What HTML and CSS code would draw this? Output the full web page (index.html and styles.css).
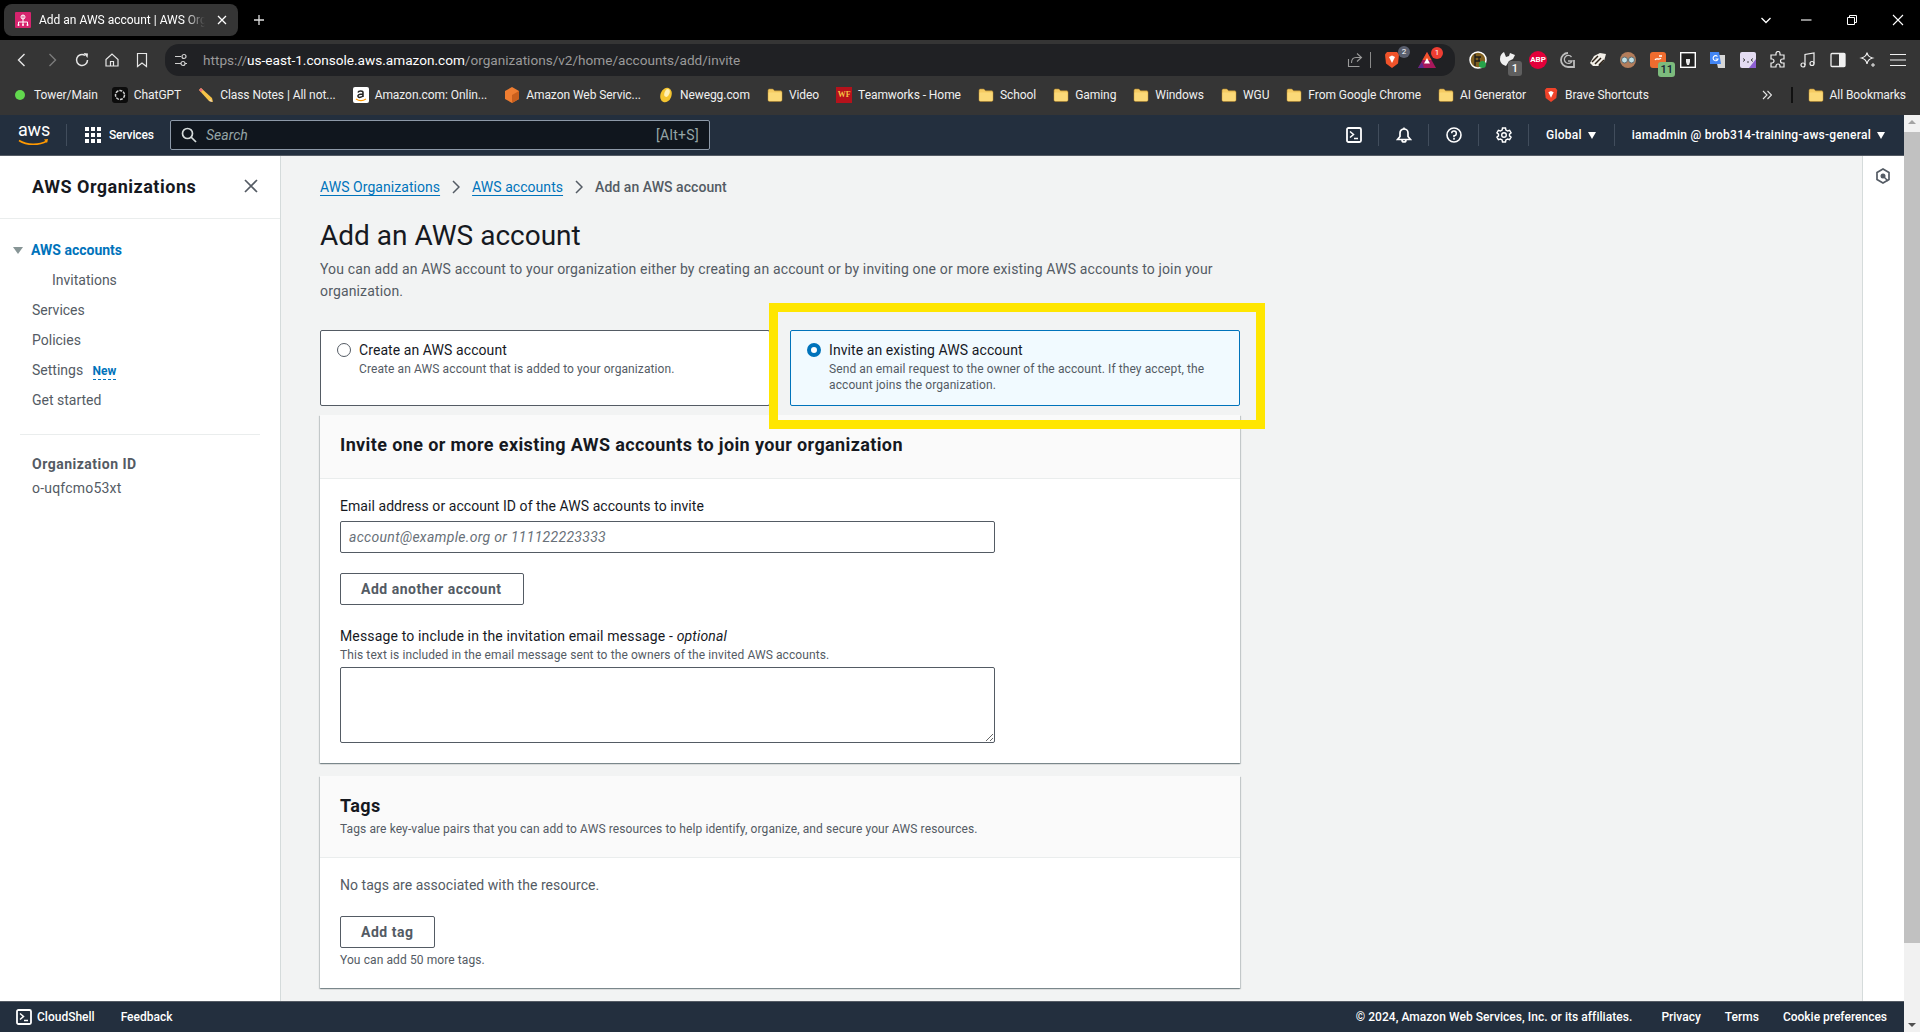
FILE: index.html
```html
<!DOCTYPE html>
<html lang="en">
<head>
  <meta charset="UTF-8" />
  <title>Add an AWS account | AWS Organizations</title>
  <link rel="stylesheet" href="styles.css">
</head>
<body>
  <svg class="defs" width="0" height="0">
    <symbol id="folder" viewBox="0 0 16 16">
      <path d="M1 3.5C1 2.7 1.6 2 2.4 2h3.4l1.8 1.8h6C14.4 3.8 15 4.4 15 5.200V13c0 .8-.6 1.400-1.400 1.400H2.400C1.600 14.400 1 13.800 1 13z" fill="#f5cb62" stroke="#a9812f" stroke-width=".6"/>
      <path d="M1.400 5.600h13.200V13c0 .6-.4 1-1 1H2.400c-.6 0-1-.4-1-1z" fill="#fbd978"/>
    </symbol>
    <symbol id="terminal" viewBox="0 0 16 16">
      <rect x="1" y="1" width="14" height="14" rx="1.500" fill="none" stroke="currentColor" stroke-width="1.800"/>
      <path d="M4 4.500 7.500 7.500 4 10.500M8 11.500h4" fill="none" stroke="currentColor" stroke-width="1.500"/>
    </symbol>
  </svg>

  <!-- Browser chrome -->
  <div class="tabstrip">
    <div class="tab">
      <svg class="favicon" width="16" height="16" viewBox="0 0 16 16">
        <rect width="16" height="16" rx="1" fill="#d6246e"/>
        <path d="M8 3v6M3.500 13v-3h9v3M8 9v4" fill="none" stroke="#fff" stroke-width="1"/>
        <circle cx="8" cy="5" r="2" fill="none" stroke="#fff"/>
        <circle cx="3.500" cy="13" r="1" fill="#fff"/><circle cx="8" cy="13" r="1" fill="#fff"/><circle cx="12.500" cy="13" r="1" fill="#fff"/>
      </svg>
      <span class="tab-title">Add an AWS account | AWS Organizations</span>
      <svg class="tab-close" width="10" height="10" viewBox="0 0 10 10"><path d="M1 1l8 8M9 1 1 9" stroke="#fff" stroke-width="1.300"/></svg>
    </div>
    <svg class="tab-new" width="12" height="12" viewBox="0 0 12 12"><path d="M6 1v10M1 6h10" stroke="#e0e0e0" stroke-width="1.300"/></svg>
    <div class="win-buttons">
      <svg width="14" height="14" viewBox="0 0 14 14"><path d="M2.500 5 7 9.500 11.500 5" fill="none" stroke="#fff" stroke-width="1.300"/></svg>
      <svg width="14" height="14" viewBox="0 0 14 14"><path d="M2 7h10.500" stroke="#fff" stroke-width="1.100"/></svg>
      <svg width="14" height="14" viewBox="0 0 14 14"><path d="M2.500 4.500h7v7h-7zM4.500 4.500V2.500h7v7h-2" fill="none" stroke="#fff"/></svg>
      <svg width="14" height="14" viewBox="0 0 14 14"><path d="M2 2l10 10M12 2 2 12" stroke="#fff" stroke-width="1.100"/></svg>
    </div>
  </div>

  <div class="toolbar">
    <div class="nav-buttons">
      <span class="slot"><svg width="16" height="16" viewBox="0 0 16 16"><path d="M10.500 2 4.500 8l6 6" fill="none" stroke="#e6e6e6" stroke-width="1.400"/></svg></span>
      <span class="slot"><svg width="16" height="16" viewBox="0 0 16 16"><path d="M5.500 2l6 6-6 6" fill="none" stroke="#7b7b7b" stroke-width="1.400"/></svg></span>
      <span class="slot"><svg width="16" height="16" viewBox="0 0 16 16"><path d="M13.500 8A5.500 5.500 0 1 1 11 3.400" fill="none" stroke="#e6e6e6" stroke-width="1.500"/><path d="M9.500 1l4.500.5-.5 4.500z" fill="#e6e6e6"/></svg></span>
      <span class="slot"><svg width="16" height="16" viewBox="0 0 16 16"><path d="M2 7.500 8 2l6 5.500V14H2zM6.500 14V9.500h3V14" fill="none" stroke="#e6e6e6" stroke-width="1.200"/></svg></span>
      <span class="slot"><svg width="16" height="16" viewBox="0 0 16 16"><path d="M3.500 1.500h9V14.500L8 11l-4.500 3.500z" fill="none" stroke="#e6e6e6" stroke-width="1.200"/></svg></span>
    </div>
    <div class="omnibox">
      <svg class="site-icon" width="16" height="16" viewBox="0 0 16 16"><path d="M2 4.500h6M12 11.500h2M2 11.500h6" stroke="#d0d0d0" stroke-width="1.200"/><circle cx="11" cy="4.500" r="2" fill="none" stroke="#d0d0d0" stroke-width="1.200"/><circle cx="10" cy="11.500" r="2" fill="none" stroke="#d0d0d0" stroke-width="1.200"/></svg>
      <span class="url"><span class="url-dim">https://</span><span class="url-host">us-east-1.console.aws.amazon.com</span><span class="url-dim">/organizations/v2/home/accounts/add/invite</span></span>
      <svg class="share-icon" width="16" height="16" viewBox="0 0 16 16"><path d="M10 1.500 14.500 5.500 10 9.500M14 5.500H9C6 5.500 4.500 7.500 4.500 11M1.500 7v7.500h11" fill="none" stroke="#9a9a9a" stroke-width="1.100"/></svg>
      <span class="omni-sep"></span>
      <span class="shield-wrap">
        <svg width="16" height="18" viewBox="0 0 16 18"><path d="M3 1h10l2 2.500-1 9L8 17l-6-4.500-1-9z" fill="#f0532a"/><path d="M5 6l3-1.500L11 6 8 12z" fill="#fff"/></svg>
        <span class="badge badge-grey">2</span>
      </span>
      <span class="bat-wrap">
        <svg width="18" height="16" viewBox="0 0 18 16"><path d="M9 0 18 16H0z" fill="#a8185c"/><path d="M9 0 13.500 8h-9z" fill="#f0532a"/><path d="M9 6l3 5.500H6z" fill="#fff"/><path d="M0 16l4-6 2 6z" fill="#5b2a8c"/></svg>
        <span class="badge badge-red">1</span>
      </span>
    </div>
    <div class="ext-row">
      <span class="slot"><svg width="18" height="18" viewBox="0 0 18 18"><circle cx="9" cy="9" r="8" fill="#806020" stroke="#fff" stroke-width="1.500"/><path d="M6 3v12M6 6h6M6 10h5M10 6v4" stroke="#1c1c1c" stroke-width="1.300" fill="none"/><circle cx="13.500" cy="13.500" r="3.500" fill="#27a34a"/></svg></span>
      <span class="slot ext-rel">
        <svg width="18" height="18" viewBox="0 0 18 18"><path d="M1 8c0-4 2-6 4-7l2 5 3-1 1-3 5 2-2 4-4 2-3 5C4 14 1 12 1 8z" fill="#f0f0f0"/></svg>
        <span class="ext-count ext-count-grey">1</span>
      </span>
      <span class="slot"><span class="abp">ABP</span></span>
      <span class="slot"><svg width="16" height="16" viewBox="0 0 16 16"><path d="M8 1a7 7 0 1 0 0 14h6V8" fill="none" stroke="#bdbdbd" stroke-width="1.800"/><path d="M11.500 5A4 4 0 1 0 12 9H8" fill="none" stroke="#bdbdbd" stroke-width="1.300"/></svg></span>
      <span class="slot"><svg width="18" height="16" viewBox="0 0 18 16"><path d="M1 11 5 4l6-3 6 1-2 7-6 5H4z" fill="#f2efe8"/><path d="M3 10l6-6M6 12l6-6M10 13l5-5" stroke="#2b2118" stroke-width="1.500"/></svg></span>
      <span class="slot"><svg width="18" height="18" viewBox="0 0 18 18"><circle cx="9" cy="9" r="8" fill="#b37d5b"/><circle cx="5.500" cy="9" r="3" fill="#bfe0e6" stroke="#5c6a70"/><circle cx="12.500" cy="9" r="3" fill="#bfe0e6" stroke="#5c6a70"/></svg></span>
      <span class="slot ext-rel">
        <svg width="16" height="16" viewBox="0 0 16 16"><rect width="16" height="16" rx="3" fill="#ef6c2f"/><path d="M5 8c2-3 4 1 6-2M9 4h3" stroke="#fff" stroke-width="1.300" fill="none"/></svg>
        <span class="ext-count ext-count-green">11</span>
      </span>
      <span class="slot"><svg width="16" height="16" viewBox="0 0 16 16"><rect x=".7" y=".7" width="14.600" height="14.600" fill="#222" stroke="#fff" stroke-width="1.400"/><path d="M8 3v3M6 7h4v3L9 13H7L6 10z" fill="#e8e8e8"/></svg></span>
      <span class="slot"><svg width="18" height="18" viewBox="0 0 18 18"><path d="M6 4h10v13H9z" fill="#d7d7d7"/><path d="M1 1h9l2 12H1z" fill="#4285f4"/><path d="M8.500 5.500a2.500 2.500 0 1 0 .5 2.500H6.500" fill="none" stroke="#fff" stroke-width="1.100"/></svg></span>
      <span class="slot"><svg width="16" height="16" viewBox="0 0 16 16"><rect width="16" height="16" rx="2" fill="#e4dcf2"/><path d="M9 16h7V7z" fill="#8d5fd3"/><path d="M3 6.500l2 1.500-2 1.500M13 6.500 11 8l2 1.500M7 10h2" stroke="#444" stroke-width="1" fill="none"/></svg></span>
      <span class="slot"><svg width="18" height="18" viewBox="0 0 18 18"><path d="M7 2.500a2 2 0 0 1 4 0V4h4v4h-1.500a2 2 0 0 0 0 4H15v4H11v-1a2 2 0 0 0-4 0v1H2v-4h1a2 2 0 0 0 0-4H2V4h5z" fill="none" stroke="#f0f0f0" stroke-width="1.200"/></svg></span>
      <span class="slot"><svg width="18" height="18" viewBox="0 0 18 18"><path d="M6 14V3.500L15 2v10.500" fill="none" stroke="#f0f0f0" stroke-width="1.200"/><circle cx="4" cy="14" r="2" fill="none" stroke="#f0f0f0" stroke-width="1.200"/><circle cx="13" cy="12.500" r="2" fill="none" stroke="#f0f0f0" stroke-width="1.200"/></svg></span>
      <span class="slot"><svg width="16" height="16" viewBox="0 0 16 16"><rect x="1" y="1.500" width="14" height="13" rx="1" fill="none" stroke="#f0f0f0" stroke-width="1.300"/><rect x="9" y="1.500" width="6" height="13" fill="#f0f0f0"/></svg></span>
      <span class="slot"><svg width="18" height="18" viewBox="0 0 18 18"><path d="M8 1.500c.5 3 2 4.500 5.500 5.500-3.500 1-5 2.500-5.500 6-.5-3.500-2-5-5.500-6C6 6 7.500 4.500 8 1.500z" fill="none" stroke="#f0f0f0" stroke-width="1.200"/><path d="M14 12v4M12 14h4" stroke="#f0f0f0"/></svg></span>
      <span class="slot"><svg width="16" height="14" viewBox="0 0 16 14"><path d="M0 1.500h16M0 7h16M0 12.500h16" stroke="#f0f0f0" stroke-width="1.200"/></svg></span>
    </div>
  </div>

  <div class="bookmarks">
    <a class="bm bm-tower"><span class="green-dot"></span>Tower/Main</a>
    <a class="bm"><svg width="16" height="16" viewBox="0 0 16 16"><rect width="16" height="16" rx="3" fill="#0c0c0c"/><circle cx="8" cy="8" r="4.500" fill="none" stroke="#d0d0d0" stroke-width="1.500" stroke-dasharray="3 1"/></svg>ChatGPT</a>
    <a class="bm"><svg width="16" height="16" viewBox="0 0 16 16"><path d="M1 3 3 1l11 10 1 4-4-1z" fill="#f6c348"/><path d="M1 3 3 1l2 2-2 2z" fill="#e9707a"/><path d="M14 15l-3-1 2-2z" fill="#f2d7b6"/></svg>Class Notes | All not...</a>
    <a class="bm"><svg width="16" height="16" viewBox="0 0 16 16"><rect width="16" height="16" rx="2" fill="#fff"/><path d="M5 5.500c.5-2 5-2 5 0V10M10 7C6 7 4.500 8 5 9.500S9 10.500 10 8.500" fill="none" stroke="#222" stroke-width="1.500"/><path d="M3 12c3 2 7 2 10 0" fill="none" stroke="#f90" stroke-width="1.200"/></svg>Amazon.com: Onlin...</a>
    <a class="bm"><svg width="16" height="16" viewBox="0 0 16 16"><path d="M8 0 15 4v8l-7 4-7-4V4z" fill="#ef7d31"/><path d="M8 8 15 4v8l-7 4z" fill="#c95f1d"/></svg>Amazon Web Servic...</a>
    <a class="bm"><svg width="16" height="16" viewBox="0 0 16 16"><ellipse cx="8" cy="8" rx="5.500" ry="7.500" transform="rotate(20 8 8)" fill="#f4c430"/><ellipse cx="9" cy="6" rx="2.500" ry="4" transform="rotate(20 9 6)" fill="#fff0b3"/></svg>Newegg.com</a>
    <a class="bm"><svg width="16" height="16"><use href="#folder"/></svg>Video</a>
    <a class="bm"><span class="wf-icon">WF</span>Teamworks - Home</a>
    <a class="bm"><svg width="16" height="16"><use href="#folder"/></svg>School</a>
    <a class="bm"><svg width="16" height="16"><use href="#folder"/></svg>Gaming</a>
    <a class="bm"><svg width="16" height="16"><use href="#folder"/></svg>Windows</a>
    <a class="bm"><svg width="16" height="16"><use href="#folder"/></svg>WGU</a>
    <a class="bm"><svg width="16" height="16"><use href="#folder"/></svg>From Google Chrome</a>
    <a class="bm"><svg width="16" height="16"><use href="#folder"/></svg>AI Generator</a>
    <a class="bm"><svg width="16" height="16" viewBox="0 0 16 18"><path d="M3 1h10l2 2.500-1 9L8 17l-6-4.500-1-9z" fill="#f0432a"/><path d="M5 6l3-1.500L11 6 8 12z" fill="#fff"/></svg>Brave Shortcuts</a>
    <span class="bm-more">
      <svg width="10" height="10" viewBox="0 0 10 10"><path d="M1 1l4 4-4 4M5.500 1l4 4-4 4" fill="none" stroke="#e6e6e6" stroke-width="1.100"/></svg>
      <span class="bm-sep"></span>
      <a class="bm"><svg width="16" height="16"><use href="#folder"/></svg>All Bookmarks</a>
    </span>
  </div>

  <!-- Page viewport -->
  <div class="viewport">
    <div class="app">
      <nav class="awsnav">
        <div class="aws-logo">
          <span class="aws-logo-text">aws</span>
          <svg width="32" height="9" viewBox="0 0 32 9">
            <path d="M1 1.500c8 5 20 5 28 .5" fill="none" stroke="#f90" stroke-width="1.600"/>
            <path d="M26 .5l4-.5-1 4z" fill="#f90"/>
          </svg>
        </div>
        <span class="nav-sep nav-sep-logo"></span>
        <svg class="grid-icon" width="16" height="16" viewBox="0 0 16 16" fill="#fff">
          <rect width="4" height="4"/><rect x="6" width="4" height="4"/><rect x="12" width="4" height="4"/>
          <rect y="6" width="4" height="4"/><rect x="6" y="6" width="4" height="4"/><rect x="12" y="6" width="4" height="4"/>
          <rect y="12" width="4" height="4"/><rect x="6" y="12" width="4" height="4"/><rect x="12" y="12" width="4" height="4"/>
        </svg>
        <span class="nav-services">Services</span>
        <div class="search">
          <svg width="16" height="16" viewBox="0 0 16 16"><circle cx="6.500" cy="6.500" r="5" fill="none" stroke="#d5dbdb" stroke-width="1.700"/><path d="M10 10l5 5" stroke="#d5dbdb" stroke-width="1.700"/></svg>
          <span class="search-text">Search</span>
          <span class="search-key">[Alt+S]</span>
        </div>
        <div class="nav-right">
          <span class="nav-icon"><svg width="16" height="16" color="#fff"><use href="#terminal"/></svg></span>
          <span class="nav-sep"></span>
          <span class="nav-icon"><svg width="16" height="16" viewBox="0 0 16 16"><path d="M1.500 12.500 4 9.500V6a4 4 0 0 1 8 0v3.500l2.500 3zM6 13a2 2 0 0 0 4 0" fill="none" stroke="#fff" stroke-width="1.700"/><path d="M8 .5v2" stroke="#fff" stroke-width="1.500"/></svg></span>
          <span class="nav-sep"></span>
          <span class="nav-icon"><svg width="16" height="16" viewBox="0 0 16 16"><circle cx="8" cy="8" r="7" fill="none" stroke="#fff" stroke-width="1.600"/><path d="M5.700 6.200A2.300 2.300 0 1 1 8 8.700v1.500" fill="none" stroke="#fff" stroke-width="1.500"/><rect x="7.200" y="11" width="1.600" height="1.700" fill="#fff"/></svg></span>
          <span class="nav-sep"></span>
          <span class="nav-icon"><svg width="16" height="16" viewBox="0 0 16 16"><path d="M6.500 1h3l.4 2 1.700 1 2-.7 1.500 2.600-1.600 1.300v1.600l1.600 1.300-1.500 2.600-2-.7-1.700 1-.4 2h-3l-.4-2-1.700-1-2 .7L.9 10.100l1.600-1.300V7.200L.9 5.900l1.500-2.600 2 .7 1.700-1z" fill="none" stroke="#fff" stroke-width="1.400"/><circle cx="8" cy="8" r="2.300" fill="none" stroke="#fff" stroke-width="1.400"/></svg></span>
          <span class="nav-sep"></span>
          <span class="nav-menu nav-region">Global<i class="caret"></i></span>
          <span class="nav-sep"></span>
          <span class="nav-menu nav-user">iamadmin @ brob314-training-aws-general<i class="caret"></i></span>
        </div>
      </nav>

      <div class="console">
        <aside class="sidebar">
          <div class="side-head">
            <h2>AWS Organizations</h2>
            <svg width="14" height="14" viewBox="0 0 14 14"><path d="M1 1l12 12M13 1 1 13" stroke="#545b64" stroke-width="1.700"/></svg>
          </div>
          <ul class="side-nav">
            <li class="side-active"><i class="side-caret"></i>AWS accounts</li>
            <li class="side-sub">Invitations</li>
            <li>Services</li>
            <li>Policies</li>
            <li>Settings <span class="new-tag">New</span></li>
            <li>Get started</li>
          </ul>
          <div class="side-org">
            <strong>Organization ID</strong>
            <span>o-uqfcmo53xt</span>
          </div>
        </aside>

        <main class="main">
          <div class="breadcrumbs">
            <a>AWS Organizations</a>
            <svg width="8" height="14" viewBox="0 0 8 14"><path d="M1 1l6 6-6 6" fill="none" stroke="#545b64" stroke-width="1.500"/></svg>
            <a>AWS accounts</a>
            <svg width="8" height="14" viewBox="0 0 8 14"><path d="M1 1l6 6-6 6" fill="none" stroke="#545b64" stroke-width="1.500"/></svg>
            <span>Add an AWS account</span>
          </div>
          <h1>Add an AWS account</h1>
          <p class="intro">You can add an AWS account to your organization either by creating an account or by inviting one or more existing AWS accounts to join your organization.</p>

          <div class="choices">
            <label class="choice">
              <i class="radio"></i>
              <span><b>Create an AWS account</b><small>Create an AWS account that is added to your organization.</small></span>
            </label>
            <label class="choice choice-on">
              <i class="radio radio-on"></i>
              <span><b>Invite an existing AWS account</b><small>Send an email request to the owner of the account. If they accept, the account joins the organization.</small></span>
            </label>
            <div class="highlight"></div>
          </div>

          <section class="card card-invite">
            <header class="card-head">
              <h3>Invite one or more existing AWS accounts to join your organization</h3>
            </header>
            <div class="card-body">
              <label class="field-label field-email">Email address or account ID of the AWS accounts to invite</label>
              <input class="text-input" type="text" placeholder="account@example.org or 111122223333">
              <button class="btn" type="button">Add another account</button>
              <label class="field-label field-gap">Message to include in the invitation email message - <em>optional</em></label>
              <p class="hint">This text is included in the email message sent to the owners of the invited AWS accounts.</p>
              <textarea class="text-area"></textarea>
            </div>
          </section>

          <section class="card card-tags">
            <header class="card-head">
              <h3>Tags</h3>
              <p class="hint">Tags are key-value pairs that you can add to AWS resources to help identify, organize, and secure your AWS resources.</p>
            </header>
            <div class="card-body">
              <p class="no-tags">No tags are associated with the resource.</p>
              <button class="btn" type="button">Add tag</button>
              <p class="hint tag-limit">You can add 50 more tags.</p>
            </div>
          </section>
        </main>

        <div class="tool-rail">
          <svg width="16" height="16" viewBox="0 0 16 16"><path d="M8 1l6 3.500v7L8 15l-6-3.500v-7z" fill="none" stroke="#545b64" stroke-width="1.700"/><circle cx="8" cy="8" r="2.500" fill="#545b64"/><path d="M9 9l4 4" stroke="#545b64" stroke-width="1.500"/></svg>
        </div>
      </div>

      <footer class="awsfoot">
        <span class="foot-shell"><svg width="16" height="16" color="#fff"><use href="#terminal"/></svg>CloudShell</span>
        <span class="foot-feedback">Feedback</span>
        <span class="foot-right">
          <span class="foot-copy">© 2024, Amazon Web Services, Inc. or its affiliates.</span>
          <span>Privacy</span>
          <span>Terms</span>
          <span>Cookie preferences</span>
        </span>
      </footer>
    </div>

    <div class="scrollbar">
      <i class="sb-up"></i>
      <div class="sb-thumb"></div>
      <i class="sb-down"></i>
    </div>
  </div>
</body>
</html>
```

FILE: styles.css
```css
/* Reset */
*, *::before, *::after {
  box-sizing: border-box;
}
html, body {
  height: 100%;
}
body {
  margin: 0;
  display: flex;
  flex-direction: column;
  overflow: hidden;
  font-family: Roboto, sans-serif;
  font-size: 14px;
  color: #16191f;
  background: #000;
}
.defs {
  position: absolute;
}
h1, h2, h3, p, ul {
  margin: 0;
  padding: 0;
}

/* Browser chrome */
.tabstrip {
  height: 40px;
  flex: none;
  display: flex;
  align-items: center;
  background: #000;
  padding-left: 4px;
  color: #fff;
}
.tab {
  width: 234px;
  height: 32px;
  display: flex;
  align-items: center;
  background: #353535;
  border-radius: 8px;
  padding-left: 11px;
}
.tab-title {
  width: 166px;
  margin-left: 8px;
  font-size: 12px;
  white-space: nowrap;
  overflow: hidden;
  -webkit-mask-image: linear-gradient(90deg, #000 88%, transparent);
  mask-image: linear-gradient(90deg, #000 88%, transparent);
}
.tab-close {
  margin-left: 12px;
}
.tab-new {
  margin-left: 15px;
}
.win-buttons {
  margin-left: auto;
  display: flex;
  gap: 32px;
  padding-right: 15px;
}
.win-buttons svg:first-child {
  margin-right: -6px;
}
.toolbar {
  height: 36px;
  flex: none;
  display: flex;
  align-items: center;
  background: #353535;
  padding: 4px 0 0 7px;
}
.slot {
  width: 30px;
  height: 30px;
  flex: none;
  display: flex;
  align-items: center;
  justify-content: center;
}
.nav-buttons {
  display: flex;
  width: 158px;
}
.omnibox {
  width: 1290px;
  height: 32px;
  flex: none;
  display: flex;
  align-items: center;
  background: #202124;
  border-radius: 14px;
  padding-left: 8px;
}
.site-icon {
  flex: none;
}
.url {
  margin-left: 14px;
  font-size: 13.6px;
  white-space: nowrap;
}
.url-dim {
  color: #9a9a9a;
}
.url-host {
  color: #fff;
}
.share-icon {
  margin-left: auto;
}
.omni-sep {
  width: 1px;
  height: 16px;
  margin-left: 7px;
  background: #8a8a8a;
}
.shield-wrap, .bat-wrap {
  position: relative;
  display: flex;
}
.shield-wrap {
  margin-left: 13px;
}
.bat-wrap {
  margin: 0 19px 0 18px;
}
.badge {
  position: absolute;
  top: -5px;
  right: -10px;
  width: 12px;
  height: 12px;
  border-radius: 50%;
  font-size: 8px;
  line-height: 12px;
  text-align: center;
  color: #fff;
}
.badge-grey {
  background: #5a5f6e;
}
.badge-red {
  background: #ee3d32;
  right: -7px;
}
.ext-row {
  display: flex;
  margin-left: 8px;
}
.ext-rel {
  position: relative;
}
.ext-count {
  position: absolute;
  right: 0;
  bottom: 0;
  min-width: 14px;
  height: 15px;
  padding: 0 2px;
  border-radius: 3px;
  font-size: 11px;
  font-weight: 500;
  line-height: 15px;
  text-align: center;
}
.ext-count-grey {
  background: #5f5f5f;
  color: #fff;
  right: 1px;
  bottom: -1px;
}
.ext-count-green {
  background: #7dbb7d;
  color: #123;
  right: -2px;
  bottom: -2px;
}
.abp {
  width: 18px;
  height: 18px;
  border-radius: 50%;
  background: #e4003a;
  color: #fff;
  font-size: 8px;
  font-weight: 700;
  line-height: 18px;
  text-align: center;
}
.bookmarks {
  height: 39px;
  flex: none;
  display: flex;
  align-items: center;
  gap: 17px;
  background: #353535;
  padding: 0 0 2px 12px;
  color: #f0f0f0;
  font-size: 12px;
  letter-spacing: -.06px;
}
.bm {
  display: flex;
  align-items: center;
  gap: 6px;
  white-space: nowrap;
}
.bm svg {
  flex: none;
}
.bm-tower {
  gap: 9px;
  padding-left: 3px;
  margin-right: -3px;
}
.green-dot {
  width: 10px;
  height: 10px;
  border-radius: 50%;
  background: #62d84e;
}
.wf-icon {
  width: 16px;
  height: 16px;
  flex: none;
  background: #b5121b;
  color: #f5c242;
  font-family: "Liberation Serif", serif;
  font-size: 8px;
  font-weight: 700;
  line-height: 16px;
  text-align: center;
}
.bm-more {
  margin-left: auto;
  display: flex;
  align-items: center;
  padding-right: 14px;
}
.bm-sep {
  width: 2px;
  height: 16px;
  background: #111;
  margin: 0 15px 0 19px;
}

/* Console header */
.viewport {
  flex: 1;
  display: flex;
  min-height: 0;
}
.app {
  flex: 1;
  display: flex;
  flex-direction: column;
  min-width: 0;
  background: #f2f3f3;
}
.awsnav {
  height: 41px;
  flex: none;
  display: flex;
  align-items: center;
  background: #232f3e;
  border-bottom: 1px solid #545b64;
  color: #fff;
  font-size: 12px;
}
.aws-logo {
  width: 32px;
  margin-left: 18px;
  flex: none;
  display: flex;
  flex-direction: column;
}
.aws-logo-text {
  font-size: 18px;
  line-height: 14px;
  letter-spacing: -.2px;
}
.aws-logo svg {
  margin-top: 2px;
}
.nav-sep {
  width: 1px;
  height: 22px;
  flex: none;
  background: #414d5c;
}
.nav-sep-logo {
  margin-left: 16px;
}
.grid-icon {
  margin-left: 18px;
  flex: none;
}
.nav-services {
  margin-left: 8px;
  font-weight: 500;
  width: 61px;
  letter-spacing: -.15px;
}
.search {
  width: 540px;
  height: 30px;
  display: flex;
  align-items: center;
  background: #10161e;
  border: 1px solid #8d99a8;
  border-radius: 2px;
  padding: 0 10px;
}
.search-text {
  margin-left: 9px;
  color: #95a5a6;
  font-size: 14px;
  font-style: italic;
}
.search-key {
  margin-left: auto;
  color: #95a5a6;
  font-size: 14px;
  letter-spacing: .3px;
}
.nav-right {
  margin-left: auto;
  display: flex;
  align-items: center;
  padding-right: 19px;
  font-weight: 500;
  letter-spacing: .25px;
}
.nav-icon {
  display: flex;
  padding: 0 16px 0 17px;
}
.nav-menu {
  display: flex;
  align-items: center;
  white-space: nowrap;
}
.nav-region {
  padding: 0 18px 0 17px;
}
.nav-user {
  padding-left: 17px;
}
.caret {
  width: 0;
  height: 0;
  margin-left: 6px;
  border: 4.5px solid transparent;
  border-top: 7px solid #fff;
  border-bottom: 0;
}

/* Console layout */
.console {
  flex: 1;
  display: flex;
  min-height: 0;
}
.sidebar {
  width: 281px;
  flex: none;
  background: #fff;
  border-right: 1px solid #d5dbdb;
  color: #545b64;
}
.side-head {
  height: 63px;
  display: flex;
  align-items: center;
  justify-content: space-between;
  padding: 0 22px 2px 32px;
  border-bottom: 1px solid #eaeded;
}
.side-head h2 {
  font-size: 18px;
  font-weight: 700;
  letter-spacing: .5px;
  color: #16191f;
}
.side-nav {
  list-style: none;
  padding-top: 16px;
}
.side-nav li {
  height: 30px;
  line-height: 30px;
  padding-left: 32px;
  position: relative;
}
.side-nav .side-sub {
  padding-left: 52px;
}
.side-nav .side-active {
  color: #0073bb;
  font-weight: 700;
  padding-left: 31px;
}
.side-caret {
  position: absolute;
  left: 13px;
  top: 12px;
  width: 0;
  height: 0;
  border: 5px solid transparent;
  border-top: 7px solid #879596;
  border-bottom: 0;
}
.new-tag {
  margin-left: 6px;
  color: #0073bb;
  font-size: 12px;
  font-weight: 700;
  border-bottom: 1px dashed #0073bb;
  padding-bottom: 1px;
}
.side-org {
  margin: 19px 20px 0;
  padding: 17px 0 0 12px;
  border-top: 1px solid #eaeded;
  letter-spacing: .2px;
}
.side-org strong, .side-org span {
  display: block;
  line-height: 24px;
}
.side-org strong {
  letter-spacing: .5px;
}

/* Main column */
.main {
  flex: 1;
  min-width: 0;
  padding: 20px 0 0 39px;
  overflow: hidden;
  letter-spacing: .15px;
}
.breadcrumbs {
  display: flex;
  align-items: center;
  gap: 12px;
  height: 22px;
  color: #545b64;
  font-weight: 500;
  letter-spacing: .05px;
}
.breadcrumbs a {
  color: #0073bb;
  font-weight: 400;
  text-decoration: underline;
  text-underline-offset: 3px;
}
.main h1 {
  margin-top: 20px;
  font-size: 28px;
  font-weight: 400;
  line-height: 36px;
  letter-spacing: 0;
}
.intro {
  width: 920px;
  margin-top: 4px;
  line-height: 22px;
  color: #545b64;
}
.choices {
  position: relative;
  width: 920px;
  margin-top: 28px;
  display: grid;
  grid-template-columns: 1fr 1fr;
  gap: 20px;
}
.choice {
  height: 76px;
  display: flex;
  gap: 8px;
  padding: 9px 16px 0;
  background: #fff;
  border: 1px solid #545b64;
  border-radius: 2px;
  letter-spacing: .08px;
}
.choice b {
  display: block;
  font-weight: 400;
  line-height: 20px;
}
.choice small {
  display: block;
  margin-top: 1px;
  font-size: 12px;
  line-height: 16px;
  letter-spacing: .1px;
  color: #545b64;
}
.choice-on {
  background: #f1faff;
  border-color: #0073bb;
}
.radio {
  width: 14px;
  height: 14px;
  flex: none;
  margin-top: 3px;
  border: 1px solid #545b64;
  border-radius: 50%;
  background: #fff;
}
.radio-on {
  border: 4px solid #0073bb;
}
/* Yellow annotation frame drawn over the screenshot */
.highlight {
  position: absolute;
  left: 449px;
  top: -27px;
  width: 496px;
  height: 126px;
  border: 9px solid #ffe600;
}

/* Cards */
.card {
  width: 920px;
  background: #fff;
  box-shadow: 0 1px 1px 0 rgba(0,28,36,.3), 1px 1px 1px 0 rgba(0,28,36,.15), -1px 1px 1px 0 rgba(0,28,36,.15);
}
.card-invite {
  margin-top: 9px;
}
.card-tags {
  margin-top: 13px;
}
.card-head {
  background: #fafafa;
  border-bottom: 1px solid #eaeded;
  padding: 19px 20px 20px;
}
.card-invite .card-head {
  height: 64px;
}
.card-head h3 {
  font-size: 18px;
  font-weight: 700;
  line-height: 22px;
  letter-spacing: .38px;
}
.card-head .hint {
  margin-top: 4px;
}
.card-body {
  padding: 16px 20px 20px;
}
.field-label {
  display: block;
  line-height: 22px;
}
.field-email {
  letter-spacing: .06px;
}
.field-gap {
  margin-top: 20px;
}
.text-input, .text-area {
  display: block;
  width: 655px;
  margin-top: 4px;
  background: #fff;
  border: 1px solid #545b64;
  border-radius: 2px;
  font-family: inherit;
  font-size: 14px;
}
.text-input {
  height: 32px;
  padding: 0 8px;
}
.text-input::placeholder {
  color: #687078;
  font-style: italic;
  letter-spacing: .3px;
}
.text-area {
  height: 76px;
}
.btn {
  display: block;
  height: 32px;
  margin-top: 20px;
  padding: 0 21px 0 20px;
  background: #fff;
  border: 1px solid #545b64;
  border-radius: 2px;
  color: #545b64;
  font-family: inherit;
  font-size: 14px;
  font-weight: 700;
  letter-spacing: .5px;
}
.hint {
  font-size: 12px;
  line-height: 16px;
  letter-spacing: .1px;
  color: #545b64;
}
.no-tags {
  line-height: 22px;
  letter-spacing: .03px;
  color: #545b64;
}
.tag-limit {
  margin-top: 4px;
}

.tool-rail {
  width: 42px;
  flex: none;
  display: flex;
  justify-content: center;
  padding-top: 12px;
  padding-right: 1px;
  background: #fff;
  border-left: 1px solid #d5dbdb;
}

/* Console footer */
.awsfoot {
  height: 31px;
  flex: none;
  display: flex;
  align-items: center;
  background: #232f3e;
  border-top: 1px solid #545b64;
  color: #fff;
  font-size: 12px;
  font-weight: 500;
  padding: 0 17px 0 16px;
}
.foot-shell {
  display: flex;
  align-items: center;
  gap: 5px;
}
.foot-feedback {
  margin-left: 26px;
}
.foot-right {
  margin-left: auto;
  display: flex;
  gap: 24px;
}
.foot-copy {
  margin-right: 5px;
  letter-spacing: .05px;
}

/* Scrollbar */
.scrollbar {
  width: 16px;
  flex: none;
  display: flex;
  flex-direction: column;
  align-items: center;
  background: #f1f1f1;
}
.sb-up, .sb-down {
  width: 0;
  height: 0;
  border: 4px solid transparent;
}
.sb-up {
  margin-top: 5px;
  border-bottom: 4px solid #a3a3a3;
  border-top: 0;
}
.sb-thumb {
  width: 100%;
  height: 811px;
  margin-top: 8px;
  background: #c1c1c1;
}
.sb-down {
  margin-top: auto;
  margin-bottom: 5px;
  border-top: 4px solid #505050;
  border-bottom: 0;
}
```
